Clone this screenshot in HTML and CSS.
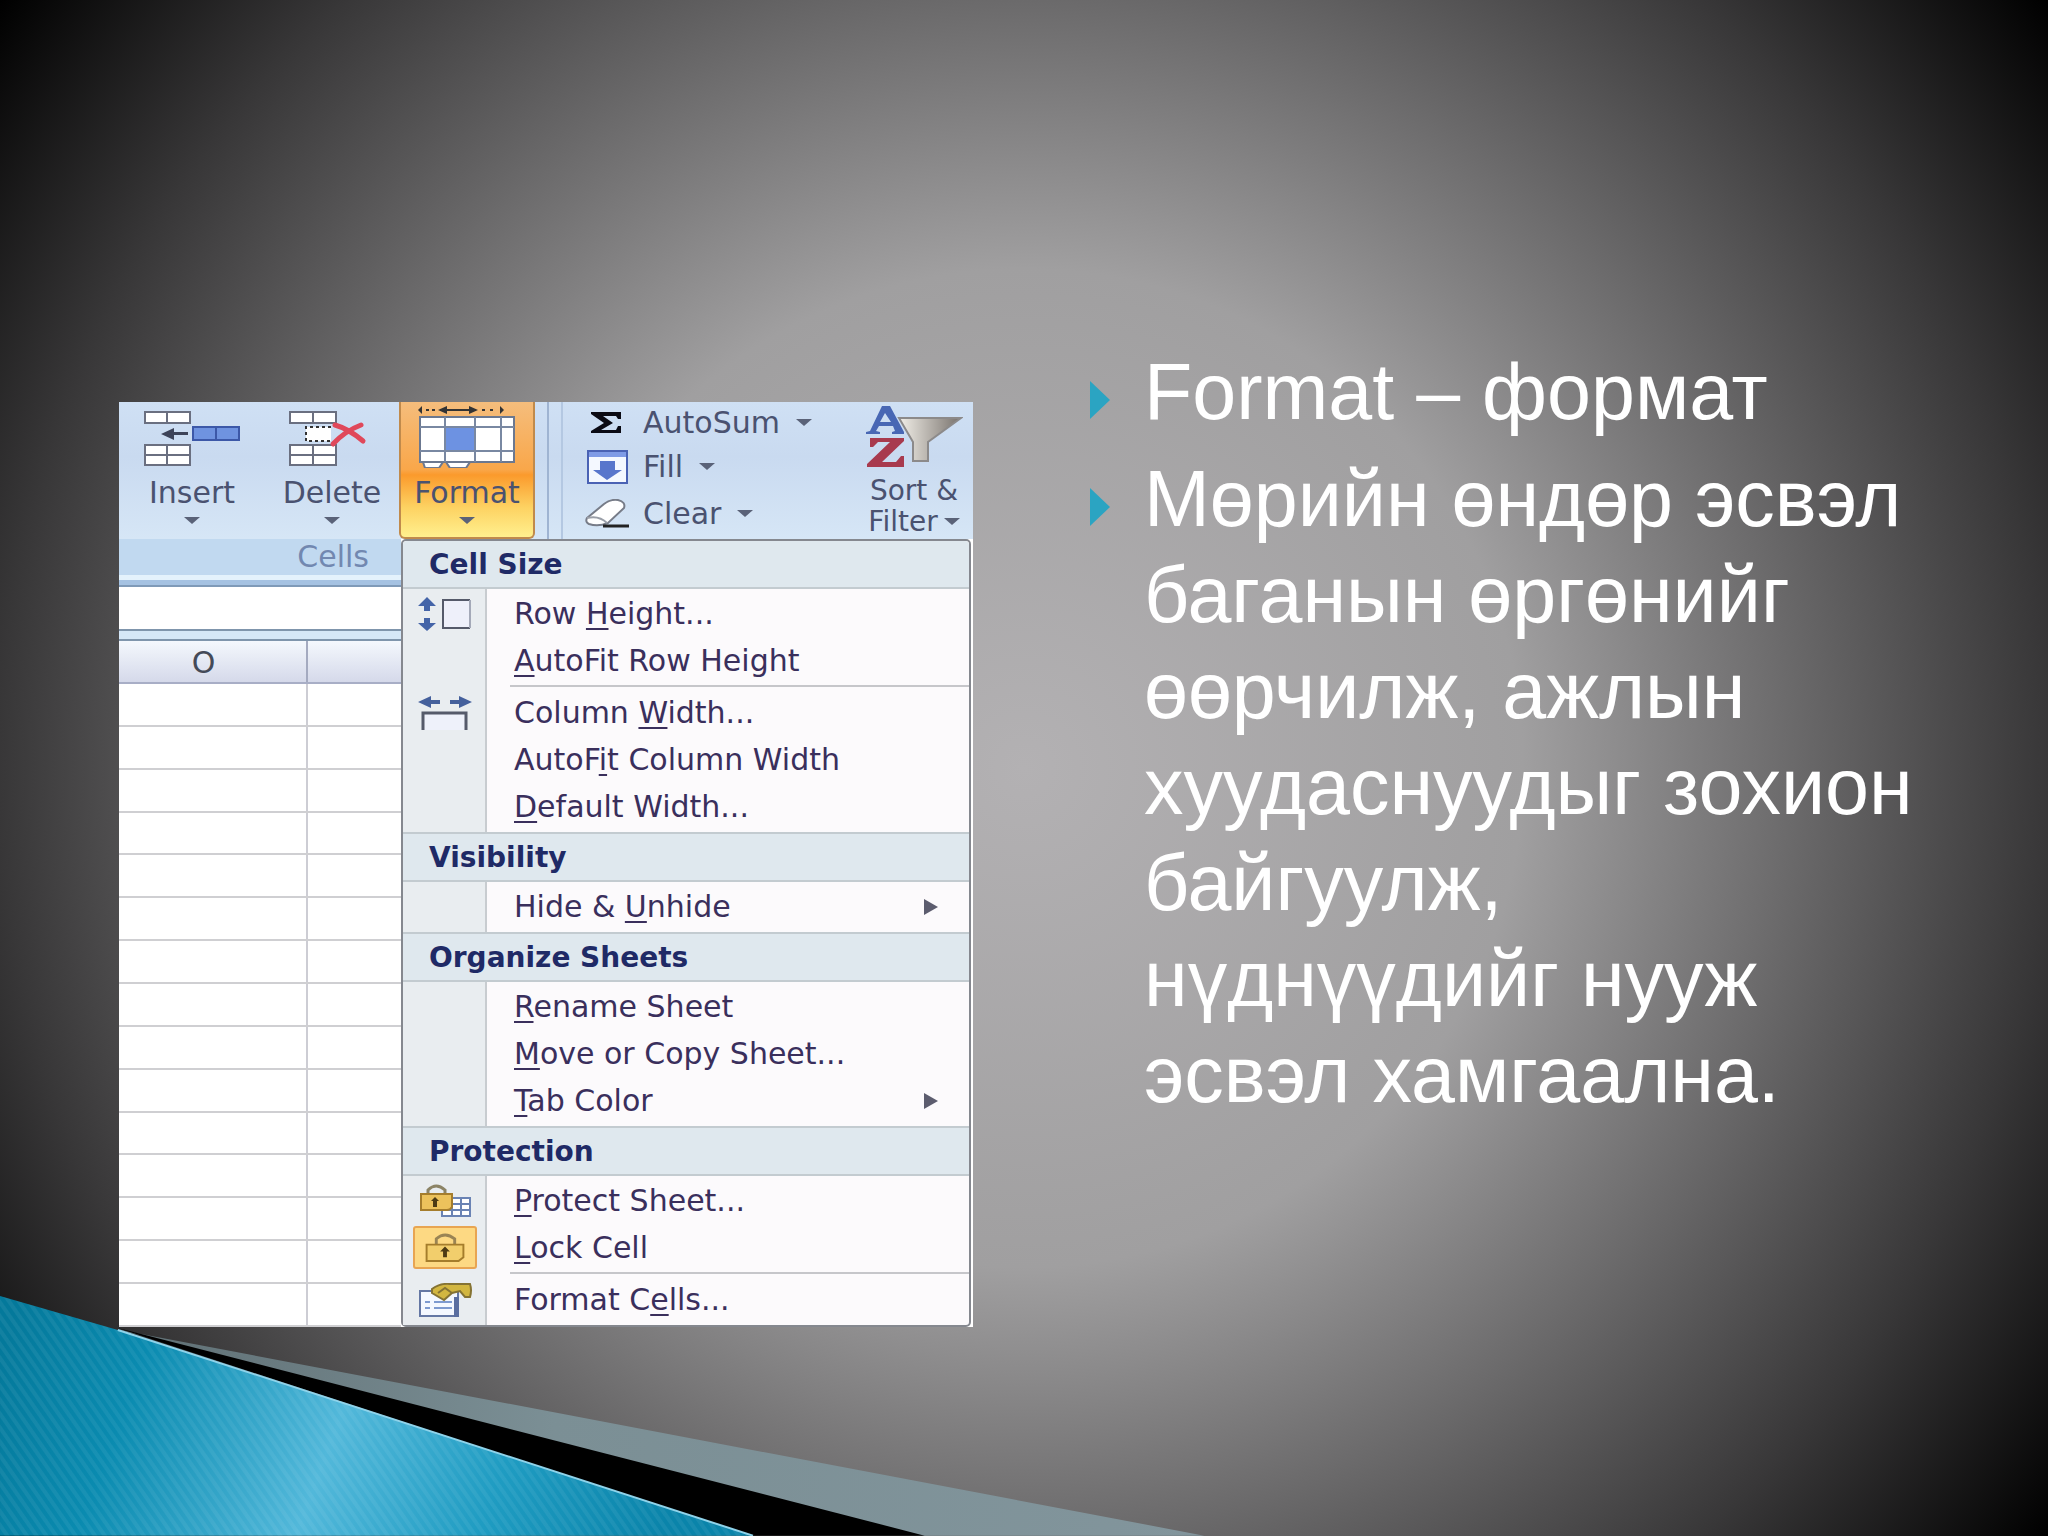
FILE: index.html
```html
<!DOCTYPE html>
<html lang="mn">
  <head>
    <meta charset="UTF-8" />
    <meta name="viewport" content="width=device-width, initial-scale=1.0" />
    <title>Format – формат</title>
    <link rel="stylesheet" href="styles.css">
  </head>
  <body>
    <main class="slide">
      <svg class="swoosh" viewBox="0 0 1210 244" aria-hidden="true">
        <defs>
          <linearGradient id="teal" gradientUnits="userSpaceOnUse" x1="0" y1="60" x2="640" y2="300">
            <stop offset="0" stop-color="#04799b" />
            <stop offset="0.2" stop-color="#0a8bb0" />
            <stop offset="0.5" stop-color="#52b8da" />
            <stop offset="0.75" stop-color="#1f9cc2" />
            <stop offset="1" stop-color="#0a84aa" />
          </linearGradient>
          <linearGradient id="mist" x1="0" y1="0" x2="1" y2="0">
            <stop offset="0" stop-color="#5f6f74" />
            <stop offset="0.4" stop-color="#7b8f95" />
            <stop offset="1" stop-color="#82959c" />
          </linearGradient>
          <pattern id="stripes" width="8" height="8" patternUnits="userSpaceOnUse" patternTransform="rotate(-35)">
            <path fill="#fff" fill-opacity="0.06" d="M0 0h4v8H0z" />
          </pattern>
        </defs>
        <path fill="url(#mist)" d="M120 38L1206 244H920z" />
        <path fill="#000" d="M118 36L926 244H750z" />
        <path fill="url(#teal)" d="M0 4L118 38L754 244H0z" />
        <path fill="url(#stripes)" d="M0 4L118 38L754 244H0z" />
        <path fill="none" stroke="#8fd3ea" stroke-width="2" d="M118 38L754 244" />
      </svg>

      <section class="excel">
        <div class="ribbon">
          <div class="cells-group">
            <button class="big">
              <svg width="98" height="58" viewBox="0 0 98 58">
                <g fill="#fff" stroke="#6a6f80" stroke-width="2">
                  <path d="M2 1h45v11H2zM24 1v11M2 34h45v20H2zM24 34v20M2 44h45" />
                </g>
                <path fill="#6f93e0" stroke="#3c58a8" stroke-width="2" d="M50 16h46v13H50zM73 16v13" />
                <path fill="#3d4358" d="M18 23l13-6v4h14v3H31v5z" />
              </svg>
              <span>Insert</span>
              <i class="caret"></i>
            </button>
            <button class="big">
              <svg width="90" height="58" viewBox="0 0 90 58">
                <g fill="#fff" stroke="#6a6f80" stroke-width="2">
                  <path d="M3 1h46v11H3zM26 1v11M3 34h46v20H3zM26 34v20M3 44h46" />
                  <path stroke="#333" stroke-dasharray="3 3" d="M44 16H19v14h25" />
                </g>
                <path fill="none" stroke="#e0485a" stroke-width="5" stroke-linecap="round" d="M48 14Q62 18 76 30M74 14Q58 20 46 33" />
              </svg>
              <span>Delete</span>
              <i class="caret"></i>
            </button>
            <button class="big pressed">
              <svg width="98" height="62" viewBox="0 0 98 62">
                <path fill="none" stroke="#333" stroke-width="2" d="M22 4h36" />
                <path fill="#333" d="M20 4l9-4v8zM60 4l-9-4v8zM0 4l4-4v8zM86 4l-4-4v8zM8 3h3v2H8zM14 3h3v2h-3zM64 3h3v2h-3zM72 3h3v2h-3z" />
                <path fill="#fff" stroke="#6b7890" stroke-width="2" d="M2 11h94v45H2zM5 56h20l-4 6H7zM28 56h24l-4 6H32z" />
                <path fill="#6d92e2" d="M28 21h28v24H28z" />
                <path fill="none" stroke="#7988a2" stroke-width="2" d="M27 11v45M57 11v45M83 11v45M2 21h94M2 45h94" />
              </svg>
              <span>Format</span>
              <i class="caret"></i>
            </button>
          </div>
          <div class="editing-group">
            <div class="small-buttons">
              <button class="small">
                <svg width="44" height="34" viewBox="0 0 44 34">
                  <path fill="#0b0b14" d="M6 6h30v7h-3l-2-3H18l10 7-12 7h15l2-4h3v7H6v-2l13-8L6 8z" />
                </svg>
                <span>AutoSum</span>
                <i class="caret"></i>
              </button>
              <button class="small">
                <svg width="44" height="36" viewBox="0 0 44 36">
                  <path fill="#f4f8ff" stroke="#4a62b4" stroke-width="2" d="M3 2h39v32H3z" />
                  <path fill="#7f9be6" d="M4 3h37v5H4z" />
                  <path fill="#5876cc" d="M15 12h15v9h7L22 31 8 21h7z" />
                </svg>
                <span>Fill</span>
                <i class="caret"></i>
              </button>
              <button class="small">
                <svg width="48" height="30" viewBox="0 0 48 30">
                  <path fill="#fff" stroke="#777c88" stroke-width="2" d="M4 19L21 5q6-5 14-4 8 2 6 8L25 24q-10 4-19 1-4-2-2-6z" />
                  <path fill="none" stroke="#9a9fa8" stroke-width="2" d="M4 19q12-3 20 5" />
                  <path fill="none" stroke="#222" stroke-width="3" d="M20 27h26" />
                </svg>
                <span>Clear</span>
                <i class="caret"></i>
              </button>
            </div>
            <button class="sort">
              <svg width="98" height="64" viewBox="0 0 98 64">
                <defs>
                  <linearGradient id="funnel" x1="0" y1="0" x2="1" y2="0">
                    <stop offset="0" stop-color="#f2efe8" />
                    <stop offset="1" stop-color="#77716c" />
                  </linearGradient>
                </defs>
                <path fill="url(#funnel)" stroke="#8c8a8a" stroke-width="2" d="M34 13h62L63 37v19H48V37z" />
                <path fill="#4867b4" fill-rule="evenodd" d="M17 1h8l14 26v2H27v-2l3-1-2-5H14l-3 5 4 1v2H1v-2l4-1zM20 8l-5 9h11z" />
                <path fill="#a83a4e" d="M5 33h34v3L17 57h14l5-6h3v11H2v-3l23-22H13l-5 5H5z" />
              </svg>
              <span>Sort &amp;</span>
              <span class="sort-line">Filter <i class="caret"></i></span>
            </button>
          </div>
        </div>

        <div class="body">
          <div class="sheet">
            <div class="group-label">Cells</div>
            <div class="frame-bar"></div>
            <div class="formula-bar"></div>
            <div class="columns"><span>O</span><span></span></div>
            <div class="grid">
              <div></div><div></div><div></div><div></div><div></div>
              <div></div><div></div><div></div><div></div><div></div>
              <div></div><div></div><div></div><div></div><div></div>
            </div>
          </div>

          <nav class="menu">
            <h2>Cell Size</h2>
            <div class="items">
              <button class="item">
                <svg width="54" height="34" viewBox="0 0 54 34">
                  <path fill="#4464a8" d="M9 0l9 9h-6v5H6V9H0zM9 34l9-8h-6v-5H6v5H0z" />
                  <path fill="#eef0fa" stroke="#555a6a" stroke-width="2" d="M52 3H25v28h27" />
                  <path stroke="#a4a9b8" stroke-width="2" d="M52 3v28" />
                </svg>
                <span>Row <u>H</u>eight...</span>
              </button>
              <button class="item"><span><u>A</u>utoFit Row Height</span></button>
              <hr>
              <button class="item">
                <svg width="54" height="34" viewBox="0 0 54 34">
                  <path fill="#44609c" d="M0 6l13-6v4h9v4h-9v4zM54 6L41 0v4h-9v4h9v4z" />
                  <path fill="#eef1fa" stroke="#555a6a" stroke-width="3" d="M5 34V17h43v17" />
                </svg>
                <span>Column <u>W</u>idth...</span>
              </button>
              <button class="item"><span>AutoF<u>i</u>t Column Width</span></button>
              <button class="item"><span><u>D</u>efault Width...</span></button>
            </div>
            <h2>Visibility</h2>
            <div class="items">
              <button class="item"><span>Hide &amp; <u>U</u>nhide</span><i class="more"></i></button>
            </div>
            <h2>Organize Sheets</h2>
            <div class="items">
              <button class="item"><span><u>R</u>ename Sheet</span></button>
              <button class="item"><span><u>M</u>ove or Copy Sheet...</span></button>
              <button class="item"><span><u>T</u>ab Color</span><i class="more"></i></button>
            </div>
            <h2>Protection</h2>
            <div class="items">
              <button class="item">
                <svg width="54" height="34" viewBox="0 0 54 34">
                  <path fill="#fff" stroke="#6a83b4" stroke-width="2" d="M24 14h28v18H24zM34 14v18M43 14v18M24 20h28M24 26h28" />
                  <path fill="none" stroke="#8c8466" stroke-width="3" d="M10 11V6q8-8 17 0v5" />
                  <path fill="#ecc25c" stroke="#a57d2c" stroke-width="2" d="M3 10h31v13q-2 3-5 3H3z" />
                  <path fill="#4c3a14" d="M17 13l4 4h-2v6h-4v-6h-2z" />
                </svg>
                <span><u>P</u>rotect Sheet...</span>
              </button>
              <button class="item checked">
                <svg width="44" height="32" viewBox="0 0 44 32">
                  <path fill="none" stroke="#9a8454" stroke-width="3" d="M13 13V7q9-8 19 0v6" />
                  <path fill="#f2ce6c" stroke="#a57d2c" stroke-width="2" d="M3 13h38v13l-5 4H3z" />
                  <path fill="#4c3a14" d="M22 15l5 5h-3v6h-4v-6h-3z" />
                </svg>
                <span><u>L</u>ock Cell</span>
              </button>
              <hr>
              <button class="item">
                <svg width="54" height="34" viewBox="0 0 54 34">
                  <path fill="#f4f8ff" stroke="#6477a4" stroke-width="2" d="M2 8h38v25H2z" />
                  <path stroke="#7d9ad0" stroke-width="2" d="M7 19h5M16 19h18M7 25h5M16 25h18" />
                  <path fill="#5a6ea0" d="M36 14h5v20h-5z" />
                  <path fill="#d2b640" stroke="#857333" stroke-width="2" d="M14 6q8-6 18-5h20q2 6 0 13h-5l-5-6-8 2-8 7-12-7z" />
                  <path fill="none" stroke="#857333" stroke-width="2" d="M20 10l7-5 7 5" />
                </svg>
                <span>Format C<u>e</u>lls...</span>
              </button>
            </div>
          </nav>
        </div>
      </section>

      <ul class="notes">
        <li>Format – формат</li>
        <li>Мөрийн өндөр эсвэл баганын өргөнийг өөрчилж, ажлын хуудаснуудыг зохион байгуулж, нүднүүдийг нууж эсвэл хамгаална.</li>
      </ul>
    </main>
  </body>
</html>
```

FILE: styles.css
```css
* {
  box-sizing: border-box;
}
body {
  margin: 0;
  background-color: #000;
}
button {
  margin: 0;
  padding: 0;
  border: none;
  background: none;
  font: inherit;
  color: inherit;
}
svg {
  display: block;
  flex: none;
}
.slide {
  position: relative;
  display: grid;
  grid-template-columns: 854fr 833fr;
  gap: 117px;
  align-items: start;
  min-height: 100vh;
  padding: 344px 125px 120px 119px;
  background: radial-gradient(circle farthest-corner at 50% 50%, #b3b1b3 0%, #a09fa0 39%, #6b6a6b 60%, #383738 80%, #000 100%);
}
.swoosh {
  position: absolute;
  left: 0;
  bottom: 0;
  width: 59%;
}

/* excel window */
.excel {
  margin-top: 58px;
  background-color: #fff;
  font-family: "DejaVu Sans", Verdana, sans-serif;
  font-size: 30px;
  line-height: 32px;
  color: #4a5270;
}
.ribbon {
  display: flex;
  height: 137px;
  background: linear-gradient(#cfe0f4, #c9daf0 40%, #d6e6f6);
}
.cells-group {
  display: grid;
  grid-template-columns: 146px 134px 136px;
  width: 430px;
  border-right: 2px solid #9fb4d2;
}
.big {
  display: flex;
  flex-direction: column;
  align-items: center;
  padding-top: 7px;
}
.big svg {
  height: 62px;
}
.big span {
  margin-top: 6px;
}
.big .caret {
  margin-top: 8px;
}
.pressed {
  padding-top: 4px;
  border: 2px solid #c08a4c;
  border-top: none;
  border-radius: 0 0 6px 6px;
  background: linear-gradient(#f5bd7c, #f9a74a 50%, #fb9a2c 54%, #fdd262 78%, #fff08e);
}
.pressed span {
  margin-top: 9px;
}
.caret {
  width: 0;
  height: 0;
  border: 8px solid transparent;
  border-top: 7px solid #5a6278;
  border-bottom: none;
}
.editing-group {
  display: flex;
  flex: 1;
  justify-content: space-between;
  margin-left: 12px;
  padding-left: 20px;
  border-left: 2px solid #b4c8e2;
}
.small-buttons {
  display: flex;
  flex-direction: column;
  align-items: flex-start;
}
.small {
  display: flex;
  align-items: center;
  height: 47px;
}
.small:first-child {
  height: 41px;
}
.small svg {
  width: 48px;
}
.small span {
  margin: 0 16px 0 12px;
}
.sort {
  display: flex;
  flex-direction: column;
  align-items: center;
  padding: 3px 10px 0 0;
  font-size: 28px;
  line-height: 31px;
}
.sort svg {
  margin-bottom: 6px;
}
.sort-line {
  display: flex;
  align-items: center;
  gap: 6px;
}

.body {
  display: flex;
}
.sheet {
  display: flex;
  flex-direction: column;
  width: 282px;
}
.group-label {
  height: 36px;
  padding-right: 32px;
  background-color: #c1d9f0;
  line-height: 36px;
  text-align: right;
  color: #7288b0;
}
.frame-bar {
  height: 12px;
  border-top: 5px solid #e4f2fc;
  border-bottom: 2px solid #7f9ab8;
  background-color: #a5c2e2;
}
.formula-bar {
  height: 52px;
  border-bottom: 8px solid #d5e7f7;
  box-shadow: inset 0 -2px #7f95ac;
}
.columns {
  display: flex;
  height: 45px;
  border-top: 2px solid #7f95ac;
  border-bottom: 2px solid #a8aec6;
  background: linear-gradient(#f4f8fd, #d5d9ea);
  line-height: 43px;
  text-align: center;
  color: #444a58;
}
.columns span {
  flex: 1;
}
.columns span:first-child {
  flex: none;
  width: 189px;
  padding-right: 18px;
  border-right: 2px solid #a4aac0;
}
.grid {
  display: flex;
  flex: 1;
  flex-direction: column;
  background: linear-gradient(#cdcdd4, #cdcdd4) 187px 0 / 2px 100% no-repeat;
}
.grid div {
  flex: 1;
  border-bottom: 2px solid #cfcfd2;
}

/* dropdown */
.menu {
  flex: 1;
  margin-right: 2px;
  border: 2px solid #85888f;
  border-radius: 5px;
  background-color: #fcfafc;
}
.menu h2 {
  height: 50px;
  margin: 0;
  padding-left: 26px;
  border-top: 2px solid #c3cbd0;
  border-bottom: 2px solid #c3cbd0;
  background-color: #dfe8ee;
  font-size: 28px;
  line-height: 48px;
  color: #1f2a66;
}
.menu h2:first-child {
  height: 48px;
  border-top: none;
  border-radius: 4px 4px 0 0;
}
.items {
  padding: 1px 0 2px;
  background: linear-gradient(90deg, #e9edf0 82px, #c8ccd0 82px, #c8ccd0 84px, transparent 84px);
}
.items hr {
  height: 2px;
  margin: 1px 0 2px 107px;
  border: none;
  background-color: #c6c6ca;
}
.item {
  display: grid;
  grid-template-columns: 84px 1fr 45px;
  align-items: center;
  width: 100%;
  height: 47px;
  text-align: left;
  color: #3a2f5c;
}
.item svg {
  grid-column: 1;
  justify-self: center;
}
.item span {
  grid-column: 2;
  padding-left: 27px;
  white-space: nowrap;
}
.item u {
  text-decoration-thickness: 2px;
  text-underline-offset: 4px;
}
.checked svg {
  width: 64px;
  height: 43px;
  padding: 4px 8px;
  border: 2px solid #e8a552;
  border-radius: 3px;
  background-color: #fdd983;
}
.more {
  width: 0;
  border: 8px solid transparent;
  border-left: 14px solid #5c5c6e;
  border-right: none;
}

/* text on the right */
.notes {
  margin: 0;
  padding: 0;
  list-style: none;
  font-family: "Liberation Sans", Arial, sans-serif;
  font-size: 79px;
  line-height: 96px;
  color: #fff;
}
.notes li {
  position: relative;
  margin-bottom: 11px;
  padding-left: 54px;
}
.notes li::before {
  content: "";
  position: absolute;
  left: 0;
  top: 37px;
  border: 19px solid transparent;
  border-left: 20px solid #2ba4c2;
  border-right: none;
}
```
